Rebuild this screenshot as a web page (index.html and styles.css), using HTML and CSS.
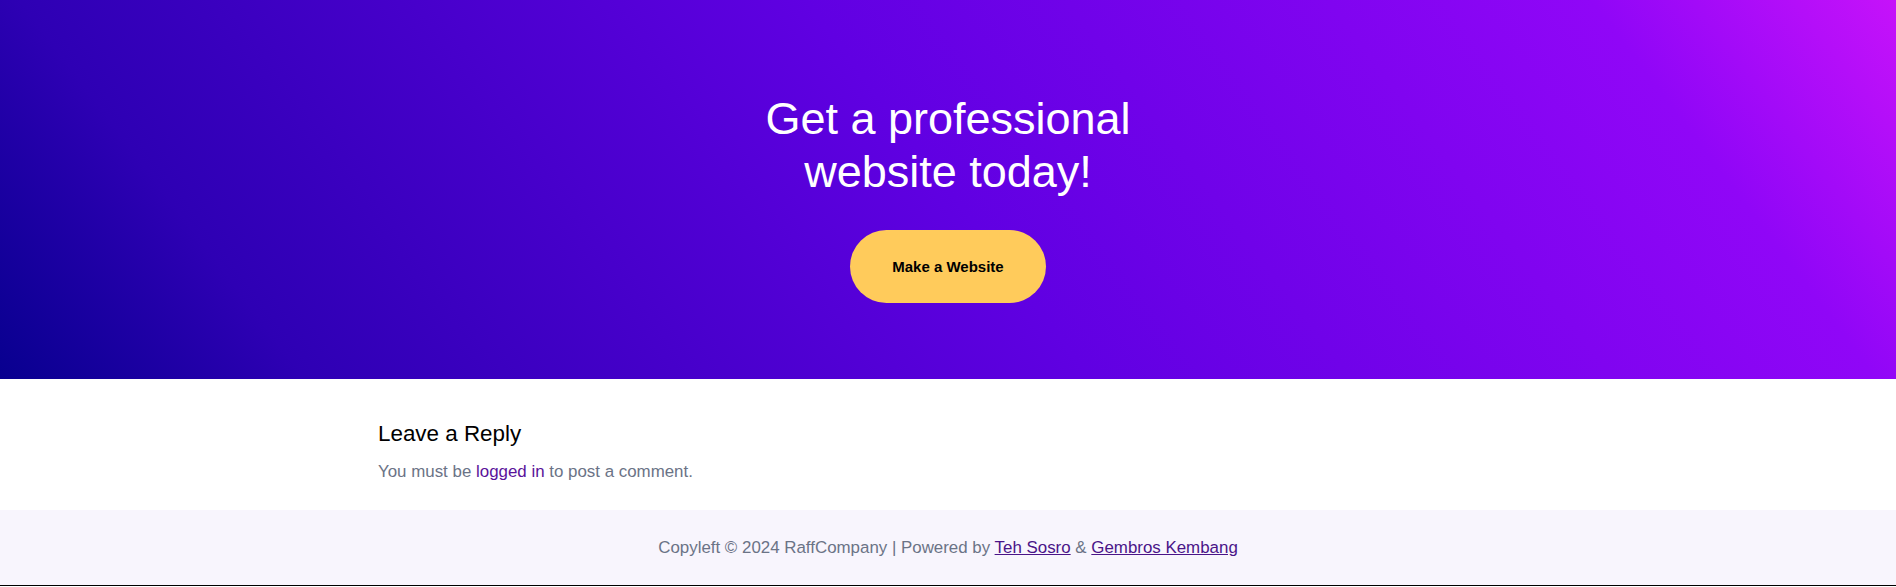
FILE: index.html
```html
<!DOCTYPE html>
<html lang="en">
<head>
<meta charset="utf-8">
<title>Get a professional website today!</title>
<link rel="stylesheet" href="styles.css">
</head>
<body>
  <section class="hero">
    <h1 class="hero-title">Get a professional<br>website today!</h1>
    <a class="hero-btn" href="#">Make a Website</a>
  </section>
  <section class="comments">
    <div class="container">
      <h2 class="reply-title">Leave a Reply</h2>
      <p class="reply-note">You must be <a class="reply-link" href="#">logged in</a> to post a comment.</p>
    </div>
  </section>
  <footer class="site-footer">
    <p class="footer-text">Copyleft © 2024 RaffCompany | Powered by <a class="footer-link" href="#">Teh Sosro</a> &amp; <a class="footer-link" href="#">Gembros Kembang</a></p>
  </footer>
</body>
</html>
```

FILE: styles.css
```css
* { box-sizing: border-box; }

html, body {
  margin: 0;
  padding: 0;
}

body {
  font-family: "Liberation Sans", Arial, sans-serif;
  background: #ffffff;
  color: #000;
}

.hero {
  display: flex;
  flex-direction: column;
  align-items: center;
  padding: 92px 0 76px;
  background: linear-gradient(53deg, #08008f 0%, #2e00b4 14%, #6000e2 50%, #9006f7 86%, #c612fa 100%);
  text-align: center;
}

.hero-title {
  margin: 0;
  font-size: 45px;
  line-height: 53px;
  font-weight: 400;
  color: #ffffff;
}

.hero-btn {
  margin-top: 32px;
  display: inline-block;
  padding: 28px 42px;
  font-size: 15px;
  line-height: 17px;
  font-weight: 700;
  color: #000;
  text-decoration: none;
  background: #ffcb5b;
  border-radius: 999px;
}

.comments {
  padding: 42px 0 26px;
  background: #fff;
}

.container {
  max-width: 1140px;
  margin: 0 auto;
}

.reply-title {
  margin: 0;
  font-size: 22.4px;
  line-height: 1.2;
  font-weight: 400;
  color: #000;
}

.reply-note {
  margin: 11px 0 0;
  font-size: 16.9px;
  line-height: 25px;
  color: #6b7386;
}

.reply-link {
  color: #5a129a;
  text-decoration: none;
}

.site-footer {
  background: #f8f5fd;
  padding: 25px 0 25px;
  border-bottom: 1px solid #000;
  text-align: center;
}

.footer-text {
  margin: 0;
  font-size: 16.9px;
  line-height: 25px;
  color: #6b7386;
}

.footer-link {
  color: #4a1488;
  text-decoration: underline;
}
```
